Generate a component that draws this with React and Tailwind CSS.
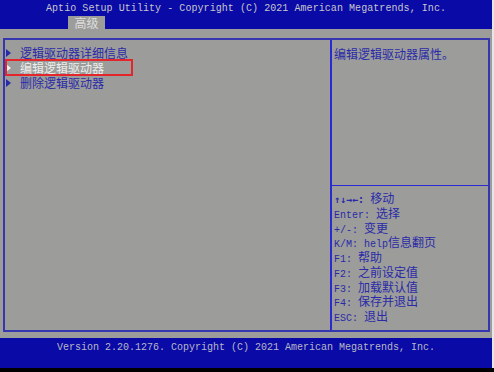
import React from "react";

function Tri({ color }) {
  return (
    <svg width="5" height="8" viewBox="0 0 5 8" className="ml-[1px] shrink-0">
      <polygon points="0,0 5,4 0,8" fill={color} />
    </svg>
  );
}

const CJK = "font-['Noto_Sans_CJK_SC',sans-serif]";

function Item({ text, selected }) {
  return (
    <div className="relative flex items-center h-[15px]">
      <Tri color={selected ? "#f2f2f2" : "#2a2aa8"} />
      <span
        className={
          "ml-[9px] text-[12px] leading-[15px] " +
          CJK +
          " " +
          (selected ? "text-[#eeeeee]" : "text-[#2a2aa8]")
        }
      >
        {text}
      </span>
      {selected && (
        <div className="absolute left-0 top-[-1px] w-[128px] h-[17px] border-2 border-[#e3262b]" />
      )}
    </div>
  );
}

function Help({ k, v, arrows }) {
  return (
    <div className="h-[14.75px] leading-[14.75px] whitespace-pre text-[#2a2aa8] text-[12px]">
      {arrows ? (
        <span className="text-[10px] leading-none font-bold font-['DejaVu_Sans_Mono',monospace]">{k}</span>
      ) : (
        <span className="text-[10px] leading-none">{k}</span>
      )}
      <span className={"text-[12px] leading-none " + CJK}>{v}</span>
    </div>
  );
}

export default function App() {
  return (
    <div className="w-[494px] h-[372px] bg-black flex flex-col font-['Liberation_Mono','Noto_Sans_CJK_SC',monospace]">
      <div className="flex h-[368px]">
        <div className="w-[492px] flex flex-col">
          <div className="h-[29px] bg-[#0a0aa6] flex flex-col">
            <div className="h-[16px] pt-[2px] text-center text-[10px] tracking-[0.06px] leading-[14px] text-[#c6c6cc] whitespace-pre">
              Aptio Setup Utility - Copyright (C) 2021 American Megatrends, Inc.
            </div>
            <div className="h-[13px] pl-[68px] flex">
              <div className={"w-[37px] h-[13px] bg-[#9c9d9a] text-[12px] leading-[13px] text-center text-[#dedede] " + CJK}>
                高级
              </div>
            </div>
          </div>
          <div className="h-[309px] bg-[#9c9d9a] pt-[9px] pl-[3px] pr-[2px] pb-[6px]">
            <div className="h-[294px] border-2 border-[#3636ae] flex">
              <div className="w-[325px] pt-[5px] flex flex-col">
                <Item text="逻辑驱动器详细信息" />
                <Item text="编辑逻辑驱动器" selected />
                <Item text="删除逻辑驱动器" />
              </div>
              <div className="w-[2px] bg-[#2a2ad0]" />
              <div className="flex-1 flex flex-col">
                <div className={"h-[145px] pl-[2px] pt-[6px] text-[12px] leading-[15px] text-[#2a2aa8] " + CJK}>
                  编辑逻辑驱动器属性。
                </div>
                <div className="h-[1px] bg-[#2a2ad0]" />
                <div className="pl-[2px] pt-[6px]">
                  <Help k="↑↓→←: " v="移动" arrows />
                  <Help k="Enter: " v="选择" />
                  <Help k="+/-: " v="变更" />
                  <Help k="K/M: help" v="信息翻页" />
                  <Help k="F1: " v="帮助" />
                  <Help k="F2: " v="之前设定值" />
                  <Help k="F3: " v="加载默认值" />
                  <Help k="F4: " v="保存并退出" />
                  <Help k="ESC: " v="退出" />
                </div>
              </div>
            </div>
          </div>
          <div className="h-[30px] bg-[#0a0aa6] text-center text-[10px] leading-[20px] text-[#b8b8c4] whitespace-pre">
            Version 2.20.1276. Copyright (C) 2021 American Megatrends, Inc.
          </div>
        </div>
        <div className="w-[2px] bg-[#e6e6e6]" />
      </div>
    </div>
  );
}
